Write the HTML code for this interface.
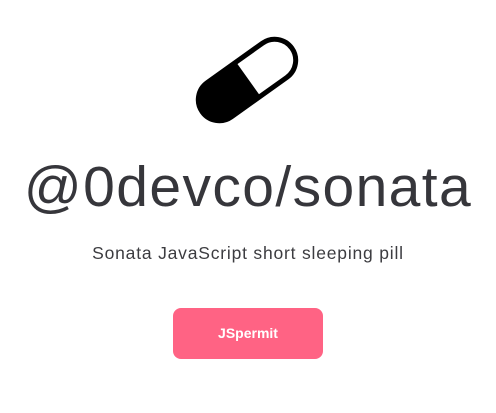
<!DOCTYPE html>
<html><head><style>
html,body{margin:0;padding:0;background:#fff;width:496px;height:413px;overflow:hidden;font-family:"Liberation Sans",sans-serif;}
svg{position:absolute;left:0;top:0}
.t{position:absolute;left:0;width:496px;text-align:center;color:#36363b;white-space:nowrap}
#h{top:154px;font-size:57px;line-height:66px;letter-spacing:1.4px}
#s{top:242px;font-size:17.5px;line-height:22px;color:#3c3c40;letter-spacing:0.8px}
#b{position:absolute;left:173px;top:308px;width:150px;height:51px;border-radius:8px;background:#ff6384;color:#fff;font-weight:bold;font-size:14px;line-height:51px;text-align:center}
</style></head><body>
<svg width="496" height="140" viewBox="0 0 496 140">
<g transform="translate(247,80) rotate(-35.5)">
<clipPath id="c"><rect x="-55" y="-21" width="110" height="42" rx="21"/></clipPath>
<rect x="-55" y="-21" width="55" height="42" fill="#000" clip-path="url(#c)"/>
<rect x="-55" y="-21" width="110" height="42" rx="21" fill="none" stroke="#000" stroke-width="5"/>
<line x1="0" y1="-21" x2="0" y2="21" stroke="#000" stroke-width="3"/>
</g>
</svg>
<div class="t" id="h">@0devco/sonata</div>
<div class="t" id="s">Sonata JavaScript short sleeping pill</div>
<div id="b">JSpermit</div>
</body></html>
